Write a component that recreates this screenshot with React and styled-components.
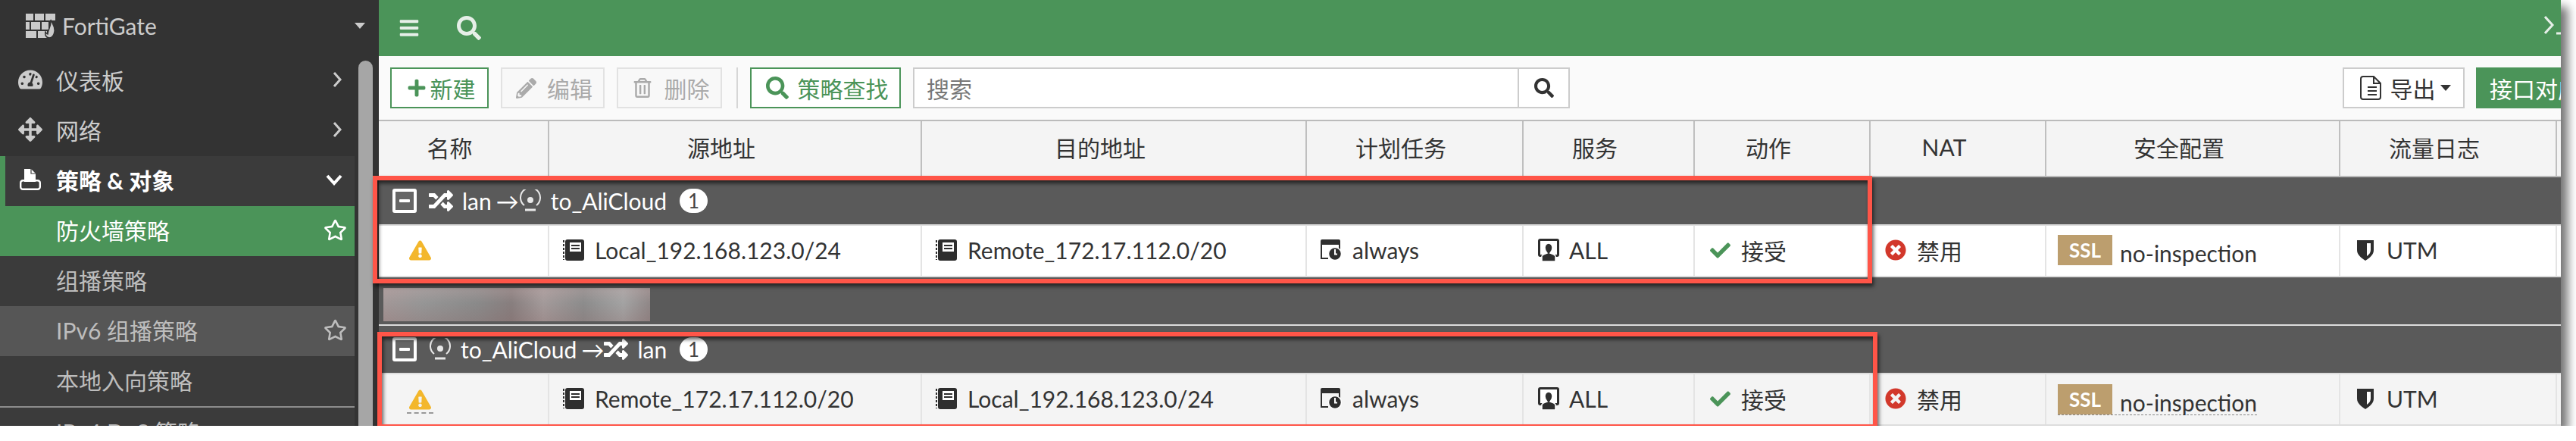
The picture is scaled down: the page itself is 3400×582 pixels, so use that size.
import React from "react";
import styled, { createGlobalStyle } from "styled-components";
import {
  FaTachometerAlt,
  FaArrowsAlt,
  FaPlus,
  FaPencilAlt,
  FaRegTrashAlt,
  FaSearch,
  FaBars,
  FaCheck,
  FaTimesCircle,
  FaRegStar,
  FaExclamationTriangle,
  FaRandom,
} from "react-icons/fa";

const GREEN = "#4b9459";
const COLS = "225px 492px 508px 286px 226px 232px 232px 388px 286px 5px";

const GlobalStyle = createGlobalStyle`
  html, body { margin: 0; padding: 0; background: #fff; }
  body { font-family: Lato, "Noto Sans CJK SC", sans-serif; }
  * { box-sizing: border-box; }
`;

const Frame = styled.div`
  position: relative;
  display: flex;
  width: 3380px;
  height: 562px;
  box-shadow: 9px 9px 12px rgba(0, 0, 0, 0.55);
`;

/* sidebar */
const Sidebar = styled.aside`
  display: flex;
  flex-direction: column;
  flex: 0 0 500px;
  height: 562px;
  overflow: hidden;
  background: #333;
  color: #ccc;
  font-size: 30px;
`;
const Brand = styled.div`
  display: flex;
  align-items: center;
  flex: 0 0 74px;
  padding: 0 18px 6px 34px;
  svg { margin-right: 9px; }
`;
const BrandCaret = styled.span`
  width: 0;
  height: 0;
  margin-left: auto;
  border-left: 7px solid transparent;
  border-right: 7px solid transparent;
  border-top: 8px solid #ccc;
`;
const SideBody = styled.div`
  display: flex;
  flex: 1;
  min-height: 0;
`;
const Nav = styled.nav`
  flex: 0 0 468px;
`;
const Gutter = styled.div`
  flex: 0 0 32px;
  padding: 6px 8px 0 5px;
`;
const Thumb = styled.div`
  height: 100%;
  border-radius: 10px 10px 0 0;
  background: #a6a6a6;
`;
const TopItem = styled.div`
  display: flex;
  align-items: center;
  height: 66px;
  padding-left: ${(p) => (p.$open ? "17px" : "24px")};
  padding-right: 16px;
  padding-bottom: 4px;
  border-left: ${(p) => (p.$open ? `7px solid ${GREEN}` : "none")};
  background: ${(p) => (p.$open ? "#3b3b3b" : "transparent")};
  color: ${(p) => (p.$open ? "#fff" : "#ccc")};
  font-weight: ${(p) => (p.$open ? 700 : 400)};
`;
const ItemIcon = styled.span`
  display: flex;
  justify-content: center;
  flex: 0 0 32px;
  margin-right: 18px;
  font-size: 32px;
`;
const SubItem = styled.div`
  display: flex;
  align-items: center;
  height: 66px;
  padding: 0 10px 4px 74px;
  background: ${(p) => (p.$active ? GREEN : p.$hover ? "#565656" : "#3b3b3b")};
  color: ${(p) => (p.$active ? "#fff" : "#bdbdbd")};
  svg { margin-left: auto; font-size: 31px; }
`;
const SubDivider = styled.div`
  height: 2px;
  background: #8c8c8c;
`;

/* main */
const Main = styled.main`
  display: flex;
  flex-direction: column;
  flex: 0 0 2880px;
  height: 562px;
  overflow: hidden;
  color: #333;
  font-size: 30px;
`;
const TopBar = styled.header`
  display: flex;
  align-items: center;
  flex: 0 0 74px;
  padding-left: 26px;
  background: ${GREEN};
  color: #e6efe8;
`;
const TopSearch = styled.span`
  display: flex;
  margin-left: 49px;
  font-size: 32px;
`;
const Terminal = styled.svg`
  margin-left: auto;
  flex: none;
`;
const Toolbar = styled.div`
  display: flex;
  align-items: center;
  flex: 0 0 84px;
  gap: 16px;
  padding-left: 15px;
  background: #fafafa;
`;
const Button = styled.div`
  display: flex;
  align-items: center;
  justify-content: center;
  flex: none;
  gap: ${(p) => p.$gap ?? 14}px;
  width: ${(p) => p.$w}px;
  height: 54px;
  padding-left: 4px;
  border: 2px solid ${(p) => (p.$variant === "primary" ? GREEN : p.$variant === "off" ? "#e2e2e2" : "#ccc")};
  background: ${(p) => (p.$variant === "off" ? "#f8f8f8" : "#fff")};
  color: ${(p) => (p.$variant === "primary" ? GREEN : p.$variant === "off" ? "#aaa" : "#333")};
  svg { flex: none; }
`;
const Separator = styled.div`
  flex: none;
  width: 2px;
  height: 54px;
  margin-left: 3px;
  background: #d6d6d6;
`;
const SearchGroup = styled.div`
  display: flex;
  flex: 0 0 867px;
  height: 54px;
  border: 2px solid #ccc;
  background: #fff;
`;
const SearchInput = styled.div`
  display: flex;
  align-items: center;
  flex: 1;
  padding-left: 16px;
  color: #777;
`;
const SearchBtn = styled.div`
  display: flex;
  align-items: center;
  justify-content: center;
  flex: 0 0 67px;
  border-left: 2px solid #ccc;
  color: #333;
`;
const ExportCaret = styled.span`
  width: 0;
  height: 0;
  margin-left: -6px;
  border-left: 7px solid transparent;
  border-right: 7px solid transparent;
  border-top: 8px solid #333;
`;
const RightTools = styled.div`
  display: flex;
  gap: 15px;
  margin-left: auto;
`;
const MapButton = styled.div`
  display: flex;
  align-items: center;
  flex: 0 0 112px;
  height: 54px;
  padding-left: 18px;
  overflow: hidden;
  background: ${GREEN};
  color: #fff;
  white-space: nowrap;
`;

/* table */
const HeaderRow = styled.div`
  display: grid;
  grid-template-columns: ${COLS};
  flex: 0 0 76px;
  border-top: 2px solid #bbb;
  border-bottom: 2px solid #bbb;
  background: #f4f4f4;
`;
const HeaderCell = styled.div`
  display: flex;
  align-items: center;
  justify-content: center;
  padding: 0 36px 4px 0;
  border-right: 2px solid #bfbfbf;
`;
const GroupRow = styled.div`
  display: flex;
  align-items: center;
  flex: 0 0 64px;
  padding-left: 18px;
  border-bottom: 2px solid #ddd;
  background: #5a5a5a;
  color: #fff;
`;
const GroupName = styled.span`
  margin-left: ${(p) => p.$ml ?? 0}px;
  white-space: nowrap;
`;
const Collapse = styled.span`
  display: flex;
  align-items: center;
  justify-content: center;
  flex: none;
  width: 32px;
  height: 32px;
  margin-right: 16px;
  border: 4px solid #fff;
  border-radius: 3px;
  background: #666;
  &::before {
    content: "";
    width: 14px;
    height: 4px;
    border-radius: 1px;
    background: #fff;
  }
`;
const Badge = styled.span`
  position: absolute;
  left: 379px;
  display: flex;
  align-items: center;
  justify-content: center;
  width: 37px;
  height: 32px;
  border-radius: 16px;
  background: #fff;
  color: #444;
  font-size: 26px;
`;
const GroupInner = styled.div`
  position: relative;
  display: flex;
  align-items: center;
  width: 100%;
`;
const Blurred = styled.div`
  width: 352px;
  height: 44px;
  margin: 10px 0 0 -12px;
  background:
    linear-gradient(180deg, rgba(190, 165, 165, 0.35), rgba(110, 110, 110, 0.1) 45%, rgba(130, 100, 100, 0.3)),
    linear-gradient(90deg, #a89c9c 0%, #9a9a9a 15%, #8d8d8d 35%, #8a8080 48%, #a99f9f 60%, #8f8f8f 75%, #a9a9a9 90%, #938a8a 100%);
`;
const DataRow = styled.div`
  display: grid;
  grid-template-columns: ${COLS};
  flex: 0 0 68px;
  border-bottom: 2px solid #ddd;
  background: ${(p) => (p.$alt ? "#f4f4f4" : "#fff")};
`;
const Cell = styled.div`
  display: flex;
  align-items: center;
  gap: ${(p) => p.$gap ?? 14}px;
  padding-left: ${(p) => p.$pl ?? 18}px;
  padding-bottom: 2px;
  border-right: 2px solid #e4e4e4;
  white-space: nowrap;
  overflow: hidden;
  svg { flex: none; }
`;
const WarnMark = styled.span`
  display: flex;
  padding: ${(p) => (p.$dashed ? "0 3px 2px" : "0")};
  border-bottom: ${(p) => (p.$dashed ? "2px dashed #999" : "none")};
  margin-top: ${(p) => (p.$dashed ? 6 : 0)}px;
`;
const SslLine = styled.span`
  display: flex;
  align-items: flex-end;
  gap: 10px;
  margin-top: ${(p) => (p.$dashed ? 2 : 0)}px;
  border-bottom: ${(p) => (p.$dashed ? "1px dashed #888" : "none")};
`;
const SslTag = styled.span`
  display: flex;
  align-items: center;
  justify-content: center;
  width: 72px;
  height: 40px;
  background: #bc9e6e;
  color: #fff;
  font-size: 26px;
  font-weight: 700;
`;
const SslText = styled.span`
  line-height: 32px;
`;

/* annotation boxes */
const RedBox = styled.div`
  position: absolute;
  left: ${(p) => p.$left}px;
  top: ${(p) => p.$top}px;
  width: ${(p) => p.$width}px;
  height: ${(p) => p.$height}px;
  border: 6px solid #ff5548;
  box-shadow: 2px 4px 5px rgba(0, 0, 0, 0.6), inset 2px 4px 5px rgba(0, 0, 0, 0.6);
  pointer-events: none;
`;

/* drawings */
const Chevron = ({ down }) => (
  <svg width={down ? 22 : 14} height={down ? 16 : 22} viewBox={down ? "0 0 22 16" : "0 0 14 22"} style={{ marginLeft: "auto" }}>
    <path
      d={down ? "M2 3l9 10 9-10" : "M3 2l8 9-8 9"}
      fill="none"
      stroke="currentColor"
      strokeWidth={down ? 4 : 3}
    />
  </svg>
);

const FortiLogo = () => (
  <svg width="39" height="32" viewBox="0 0 39 32" fill="#cacaca">
    <rect x="0" y="0" width="10" height="9" />
    <rect x="12" y="0" width="12" height="9" />
    <rect x="26" y="0" width="13" height="9" />
    <rect x="0" y="11" width="5" height="10" />
    <rect x="7" y="11" width="12" height="10" />
    <rect x="21" y="11" width="9" height="10" />
    <rect x="0" y="23" width="14" height="9" />
    <rect x="16" y="23" width="12" height="9" />
    <path d="M33 8c2 5 6 9 5 16-1 5-4 8-7 8-4 0-6-4-5-8 1 2 2 3 3 3 0-6 5-10 4-19z" stroke="#333" strokeWidth="1.5" />
  </svg>
);

const PolicyIcon = () => (
  <svg width="28" height="28" viewBox="0 0 28 28">
    <path d="M6 0h9l6 6v11H6z" fill="#fff" />
    <path d="M15 0v6h6" fill="none" stroke="#3b3b3b" strokeWidth="1.2" />
    <rect x="1.2" y="15.2" width="25.6" height="11.6" rx="3" fill="#3b3b3b" stroke="#fff" strokeWidth="2.4" />
    <path d="M6 14h15v3H6z" fill="#fff" />
  </svg>
);

const ExportIcon = () => (
  <svg width="28" height="32" viewBox="0 0 28 32" fill="none" stroke="#333" strokeWidth="2">
    <path d="M1 4a3 3 0 0 1 3-3h14l9 9v18a3 3 0 0 1-3 3H4a3 3 0 0 1-3-3z" />
    <path d="M18 1v9h9" />
    <path d="M10 15h12M10 20h12M10 25h12" />
  </svg>
);

const AddressIcon = () => (
  <svg width="28" height="28" viewBox="0 0 28 28">
    <rect x="3" y="0" width="25" height="28" rx="3" fill="#2e2e2e" />
    <path d="M1 1v26" stroke="#2e2e2e" strokeWidth="2" strokeDasharray="3 2" />
    <rect x="9" y="4" width="15" height="12" fill="#fff" />
    <path d="M11 8h11M11 12h11" stroke="#2e2e2e" strokeWidth="2" />
  </svg>
);

const ScheduleIcon = () => (
  <svg width="28" height="28" viewBox="0 0 28 28">
    <path d="M2 0h22a2 2 0 0 1 2 2v5H0V2a2 2 0 0 1 2-2z" fill="#2e2e2e" />
    <path d="M1 6v19h9M25 6v8" fill="none" stroke="#2e2e2e" strokeWidth="2" />
    <circle cx="19" cy="19" r="8.5" fill="#2e2e2e" stroke="#fff" strokeWidth="1.5" />
    <path d="M19 13v6.5h3" fill="none" stroke="#fff" strokeWidth="2" />
  </svg>
);

const ServiceIcon = () => (
  <svg width="28" height="30" viewBox="0 0 28 30">
    <rect x="1.5" y="1.5" width="25" height="21" rx="1.5" fill="#fff" stroke="#2e2e2e" strokeWidth="3" />
    <path d="M14 6c3 0 5 3 5 6 0 3-1 5-3 7 3 1 6 2 7 4v7H5v-7c1-2 4-3 7-4-2-2-3-4-3-7 0-3 2-6 5-6z" fill="#2e2e2e" stroke="#fff" strokeWidth="1.5" />
  </svg>
);

const ShieldIcon = () => (
  <svg width="24" height="28" viewBox="0 0 24 28">
    <path d="M1 1h22v13c0 6-5 10-11 14C6 24 1 20 1 14z" fill="#2e2e2e" />
    <path d="M14 5h5v9c0 3-2 6-5 8z" fill="#fff" />
  </svg>
);

const TunnelIcon = () => (
  <svg width="30" height="30" viewBox="0 0 30 30" fill="none" stroke="#e8e8e8">
    <path d="M7 21a13 13 0 1 1 16 0" strokeWidth="2" />
    <circle cx="15" cy="14" r="4" fill="#e8e8e8" stroke="none" />
    <path d="M8 27h14" strokeWidth="3" />
  </svg>
);

const Warn = ({ dashed }) => (
  <WarnMark $dashed={dashed}>
    <FaExclamationTriangle size={29} color="#f3b72c" />
  </WarnMark>
);

const columns = ["名称", "源地址", "目的地址", "计划任务", "服务", "动作", "NAT", "安全配置", "流量日志", ""];

const PolicyRow = ({ alt, src, dst }) => (
  <DataRow $alt={alt}>
    <Cell $pl={alt ? 37 : 40}>
      <Warn dashed={alt} />
    </Cell>
    <Cell><AddressIcon />{src}</Cell>
    <Cell><AddressIcon />{dst}</Cell>
    <Cell><ScheduleIcon />always</Cell>
    <Cell $pl={19} $gap={13}><ServiceIcon />ALL</Cell>
    <Cell $pl={20}><FaCheck size={27} color={GREEN} />接受</Cell>
    <Cell $pl={19}><FaTimesCircle size={28} color="#d2382b" />禁用</Cell>
    <Cell $pl={15}>
      <SslLine $dashed={alt}>
        <SslTag>SSL</SslTag>
        <SslText>no-inspection</SslText>
      </SslLine>
    </Cell>
    <Cell $pl={21} $gap={16}><ShieldIcon />UTM</Cell>
    <Cell />
  </DataRow>
);

export default function App() {
  return (
    <>
      <GlobalStyle />
      <Frame>
        <Sidebar>
          <Brand>
            <FortiLogo />
            FortiGate
            <BrandCaret />
          </Brand>
          <SideBody>
            <Nav>
              <TopItem>
                <ItemIcon><FaTachometerAlt /></ItemIcon>
                仪表板
                <Chevron />
              </TopItem>
              <TopItem>
                <ItemIcon><FaArrowsAlt /></ItemIcon>
                网络
                <Chevron />
              </TopItem>
              <TopItem $open>
                <ItemIcon><PolicyIcon /></ItemIcon>
                策略 &amp; 对象
                <Chevron down />
              </TopItem>
              <SubItem $active>防火墙策略<FaRegStar /></SubItem>
              <SubItem>组播策略</SubItem>
              <SubItem $hover>IPv6 组播策略<FaRegStar /></SubItem>
              <SubItem>本地入向策略</SubItem>
              <SubDivider />
              <SubItem>IPv4 DoS 策略</SubItem>
            </Nav>
            <Gutter><Thumb /></Gutter>
          </SideBody>
        </Sidebar>

        <Main>
          <TopBar>
            <FaBars size={28} />
            <TopSearch><FaSearch /></TopSearch>
            <Terminal width="22" height="32" viewBox="0 0 22 32" fill="none" stroke="#e6efe8">
              <path d="M1 1l10 11L1 23" strokeWidth="3" />
              <path d="M16 23h6" strokeWidth="3" />
            </Terminal>
          </TopBar>

          <Toolbar>
            <Button $variant="primary" $w={130} $gap={5}><FaPlus size={26} />新建</Button>
            <Button $variant="off" $w={137}><FaPencilAlt size={27} />编辑</Button>
            <Button $variant="off" $w={139} $gap={16}><FaRegTrashAlt size={26} />删除</Button>
            <Separator />
            <Button $variant="primary" $w={199} $gap={12}><FaSearch size={30} />策略查找</Button>
            <SearchGroup>
              <SearchInput>搜索</SearchInput>
              <SearchBtn><FaSearch size={26} /></SearchBtn>
            </SearchGroup>
            <RightTools>
              <Button $w={161} $gap={12}>
                <ExportIcon />
                导出
                <ExportCaret />
              </Button>
              <MapButton>接口对应视图</MapButton>
            </RightTools>
          </Toolbar>

          <HeaderRow>
            {columns.map((c, i) => (
              <HeaderCell key={i}>{c}</HeaderCell>
            ))}
          </HeaderRow>

          <GroupRow>
            <GroupInner>
              <Collapse />
              <FaRandom size={32} />
              <GroupName $ml={12}>lan</GroupName>
              <GroupName $ml={6}>→</GroupName>
              <TunnelIcon />
              <GroupName $ml={12}>to_AliCloud</GroupName>
              <Badge>1</Badge>
            </GroupInner>
          </GroupRow>
          <PolicyRow src="Local_192.168.123.0/24" dst="Remote_172.17.112.0/20" />

          <GroupRow>
            <Blurred />
          </GroupRow>

          <GroupRow>
            <GroupInner>
              <Collapse />
              <TunnelIcon />
              <GroupName $ml={12}>to_AliCloud</GroupName>
              <GroupName $ml={6}>→</GroupName>
              <FaRandom size={32} />
              <GroupName $ml={12}>lan</GroupName>
              <Badge>1</Badge>
            </GroupInner>
          </GroupRow>
          <PolicyRow alt src="Remote_172.17.112.0/20" dst="Local_192.168.123.0/24" />
        </Main>

        <RedBox $left={492} $top={232} $width={1979} $height={142} />
        <RedBox $left={498} $top={438} $width={1980} $height={128} />
      </Frame>
    </>
  );
}
